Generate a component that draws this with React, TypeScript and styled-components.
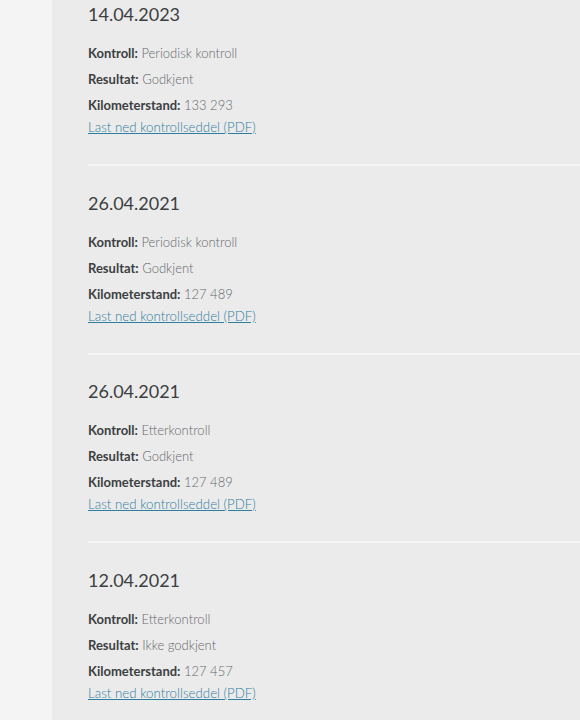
import React from "react";
import styled, { createGlobalStyle } from "styled-components";

const Global = createGlobalStyle`
  html, body { margin: 0; padding: 0; background: #f4f4f4; }
  body { font-family: Lato, "Noto Sans", sans-serif; }
`;

const Page = styled.div`
  display: flex;
  min-height: 720px;
  background: #f4f4f4;
`;

const Gutter = styled.div`
  width: 52px;
  flex: none;
`;

const Panel = styled.main`
  flex: 1;
  background: #ebebeb;
  padding: 2px 0 0 36px;
  overflow: hidden;
`;

const Section = styled.section`
  display: flex;
  flex-direction: column;
`;

const DateTitle = styled.h2`
  margin: 0;
  font-size: 18px;
  line-height: 24px;
  font-weight: 400;
  color: #3c3f42;
`;

const Details = styled.div`
  margin-top: 14px;
  display: flex;
  flex-direction: column;
`;

const Row = styled.div`
  font-size: 13px;
  line-height: 26px;
  color: #66696b;
  font-weight: 300;
`;

const Label = styled.span`
  font-weight: 700;
  color: #3c3f42;
`;

const PdfLink = styled.a`
  font-size: 13.3px;
  line-height: 18px;
  color: #2f7ea0;
  text-decoration: underline;
  font-weight: 300;
  align-self: flex-start;
`;

const Divider = styled.hr`
  margin: 28px 0 24.6px;
  border: none;
  height: 2px;
  background: #f6f6f6;
`;

const items = [
  { date: "14.04.2023", kontroll: "Periodisk kontroll", resultat: "Godkjent", km: "133 293" },
  { date: "26.04.2021", kontroll: "Periodisk kontroll", resultat: "Godkjent", km: "127 489" },
  { date: "26.04.2021", kontroll: "Etterkontroll", resultat: "Godkjent", km: "127 489" },
  { date: "12.04.2021", kontroll: "Etterkontroll", resultat: "Ikke godkjent", km: "127 457" },
];

export default function App() {
  return (
    <>
      <Global />
      <Page>
        <Gutter />
        <Panel>
          {items.map((it, i) => (
            <Section key={i}>
              <DateTitle>{it.date}</DateTitle>
              <Details>
                <Row><Label>Kontroll:</Label> {it.kontroll}</Row>
                <Row><Label>Resultat:</Label> {it.resultat}</Row>
                <Row><Label>Kilometerstand:</Label> {it.km}</Row>
              </Details>
              <PdfLink href="#">Last ned kontrollseddel (PDF)</PdfLink>
              <Divider />
            </Section>
          ))}
        </Panel>
      </Page>
    </>
  );
}
